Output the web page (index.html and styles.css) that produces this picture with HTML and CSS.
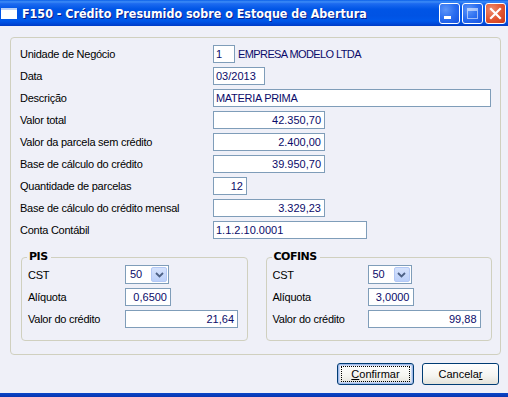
FILE: index.html
```html
<!DOCTYPE html>
<html lang="pt">
<head>
<meta charset="utf-8">
<link rel="stylesheet" href="styles.css">
</head>
<body>
<div class="window">
  <div class="titlebar">
    <span class="app-icon"></span>
    <span class="title">F150 - Crédito Presumido sobre o Estoque de Abertura</span>
    <div class="caption-btns">
      <span class="cbtn cmin"><span class="min-bar"></span></span>
      <span class="cbtn cmax"><span class="max-box"></span></span>
      <span class="cbtn cclose">
        <svg width="13" height="13" viewBox="0 0 13 13"><path d="M2 2 L11 11 M11 2 L2 11" stroke="#fff" stroke-width="2.2" stroke-linecap="square"/></svg>
      </span>
    </div>
  </div>
  <div class="client">
    <div class="panel">
      <div class="form">
        <label>Unidade de Negócio</label>
        <div class="field-line"><span class="input w-unit">1</span><span class="company">EMPRESA MODELO LTDA</span></div>
        <label>Data</label>
        <div><span class="input w-date">03/2013</span></div>
        <label>Descrição</label>
        <div><span class="input w-desc txt">MATERIA PRIMA</span></div>
        <label>Valor total</label>
        <div><span class="input w-val num">42.350,70</span></div>
        <label>Valor da parcela sem crédito</label>
        <div><span class="input w-val num">2.400,00</span></div>
        <label>Base de cálculo do crédito</label>
        <div><span class="input w-val num">39.950,70</span></div>
        <label>Quantidade de parcelas</label>
        <div><span class="input w-qty num">12</span></div>
        <label>Base de cálculo do crédito mensal</label>
        <div><span class="input w-val num">3.329,23</span></div>
        <label>Conta Contábil</label>
        <div><span class="input w-conta">1.1.2.10.0001</span></div>
      </div>
      <div class="groups">
        <fieldset class="group">
          <legend>PIS</legend>
          <div class="gform">
            <label>CST</label>
            <div><span class="select">50<span class="arrow"><svg width="9" height="6" viewBox="0 0 9 6"><path d="M1 1 L4.5 4.5 L8 1" fill="none" stroke="#4d6185" stroke-width="1.8"/></svg></span></span></div>
            <label>Alíquota</label>
            <div><span class="input w-aliq num">0,6500</span></div>
            <label>Valor do crédito</label>
            <div><span class="input w-cred num">21,64</span></div>
          </div>
        </fieldset>
        <fieldset class="group cofins">
          <legend>COFINS</legend>
          <div class="gform">
            <label>CST</label>
            <div><span class="select">50<span class="arrow"><svg width="9" height="6" viewBox="0 0 9 6"><path d="M1 1 L4.5 4.5 L8 1" fill="none" stroke="#4d6185" stroke-width="1.8"/></svg></span></span></div>
            <label>Alíquota</label>
            <div><span class="input w-aliq num">3,0000</span></div>
            <label>Valor do crédito</label>
            <div><span class="input w-cred num">99,88</span></div>
          </div>
        </fieldset>
      </div>
    </div>
    <div class="buttons">
      <button class="btn default"><span class="focus"><u>C</u>onfirmar</span></button>
      <button class="btn">Cancela<u>r</u></button>
    </div>
  </div>
  <div class="bottom-frame"></div>
</div>
</body>
</html>
```

FILE: styles.css
```css
* { box-sizing: border-box; }
html, body { margin: 0; padding: 0; }
body {
  width: 508px;
  height: 397px;
  overflow: hidden;
  font-family: "Liberation Sans", Arial, sans-serif;
  font-size: 11px;
  color: #000;
  background: #eff0f8;
}
.window {
  display: flex;
  flex-direction: column;
  height: 397px;
}
.titlebar {
  height: 26px;
  flex: none;
  display: flex;
  align-items: center;
  background: linear-gradient(180deg, #0a5fe8 0%, #3d8cf7 7%, #1d6bf0 14%, #0055e6 35%, #0053e4 60%, #0058ea 80%, #0048d8 92%, #003bc4 100%);
  color: #fff;
}
.app-icon {
  width: 16px;
  height: 11px;
  margin-left: 1px;
  margin-top: 1px;
  background: #fff;
  border-top: 2px solid #b9d1f8;
  flex: none;
}
.title {
  margin-left: 5px;
  font-family: "DejaVu Sans Condensed", "DejaVu Sans", sans-serif;
  font-weight: bold;
  font-size: 12.4px;
  text-shadow: 1px 1px 0 #0a1e8a;
  white-space: nowrap;
  flex: 1;
}
.caption-btns {
  display: flex;
  gap: 2px;
  margin-right: 2px;
  margin-top: 1px;
}
.cbtn {
  width: 21px;
  height: 21px;
  border: 1px solid #fff;
  border-radius: 3px;
  display: flex;
  align-items: center;
  justify-content: center;
}
.cmin, .cmax {
  background: radial-gradient(circle at 30% 30%, #5d95f8 0%, #2a6df0 50%, #1551e0 100%);
}
.cclose {
  background: radial-gradient(circle at 30% 30%, #ee8c70 0%, #e2542e 55%, #c8381a 100%);
}
.min-bar {
  width: 7px;
  height: 3px;
  background: #fff;
  margin-top: 8px;
  margin-left: -4px;
}
.max-box {
  width: 11px;
  height: 11px;
  border: 1px solid #fff;
  border-top-width: 3px;
  opacity: 0.55;
}
.client {
  flex: 1;
  padding: 11px 7px 0 10px;
  display: flex;
  flex-direction: column;
}
.panel {
  height: 318px;
  border: 1px solid #d0d0bf;
  border-radius: 4px;
  padding: 7px 8px 0 9px;
  display: flex;
  flex-direction: column;
}
.form {
  display: grid;
  grid-template-columns: 193px 1fr;
  row-gap: 4px;
  align-items: center;
}
.form label, .gform label {
  line-height: 18px;
  white-space: nowrap;
  letter-spacing: -0.25px;
}
.field-line {
  display: flex;
  align-items: center;
}
.input {
  display: block;
  height: 18px;
  border: 1px solid #7f9db9;
  background: #fff;
  color: #0b0b6a;
  line-height: 16px;
  padding: 0 2px 0 2px;
  white-space: nowrap;
}
.input.num { text-align: right; padding-right: 3px; }
.input.txt { letter-spacing: -0.3px; }
.w-unit { width: 22px; }
.company { margin-left: 3px; color: #0b0b6a; letter-spacing: -0.6px; }
.w-date { width: 52px; }
.w-desc { width: 278px; }
.w-val { width: 112px; }
.w-qty { width: 34px; }
.w-conta { width: 154px; }
.groups {
  display: flex;
  gap: 18px;
  margin-top: 12px;
  margin-left: 1px;
}
.group {
  width: 227px;
  height: 90px;
  margin: 0;
  border: 1px solid #d0d0bf;
  border-radius: 4px;
  padding: 2px 6px 0 6px;
}
.group legend {
  font-weight: bold;
  font-family: "DejaVu Sans", sans-serif;
  font-size: 11px;
  letter-spacing: -0.5px;
  padding: 0 3px 0 2px;
  margin-left: -1px;
  color: #000;
  line-height: 12px;
}
.gform {
  display: grid;
  grid-template-columns: 97px 1fr;
  row-gap: 4px;
  align-items: center;
}
.cofins .gform { grid-template-columns: 95px 1fr; }
.select {
  display: flex;
  align-items: center;
  justify-content: space-between;
  width: 44px;
  height: 19px;
  border: 1px solid #7f9db9;
  background: #fff;
  color: #0b0b6a;
  padding: 0 1px 0 4px;
  line-height: 17px;
}
.arrow {
  width: 16px;
  height: 15px;
  border-radius: 2px;
  background: linear-gradient(180deg, #d5e2fc 0%, #bcd0fa 100%);
  border: 1px solid #b3c8f5;
  display: flex;
  align-items: center;
  justify-content: center;
}
.w-aliq { width: 46px; }
.w-cred { width: 113px; }
.buttons {
  display: flex;
  justify-content: flex-end;
  gap: 8px;
  margin-top: 8px;
  padding-right: 2px;
}
.btn {
  width: 77px;
  height: 22px;
  border: 1px solid #003c74;
  border-radius: 3px;
  background: linear-gradient(180deg, #ffffff 0%, #f4f4f0 60%, #e3e2da 100%);
  font-family: "Liberation Sans", Arial, sans-serif;
  font-size: 11px;
  color: #000;
  padding: 0;
  display: flex;
  align-items: center;
  justify-content: center;
}
.btn.default {
  box-shadow: inset 0 0 0 1px #9fb8e8, inset 0 0 0 2px #c9d9f5;
}
.focus {
  outline: 1px dotted #000;
  outline-offset: 0;
  width: 67px;
  height: 14px;
  line-height: 14px;
  display: block;
  text-align: center;
}
.bottom-frame {
  height: 4px;
  background: linear-gradient(180deg, #0a47c8, #0835b0);
  flex: none;
}
```
